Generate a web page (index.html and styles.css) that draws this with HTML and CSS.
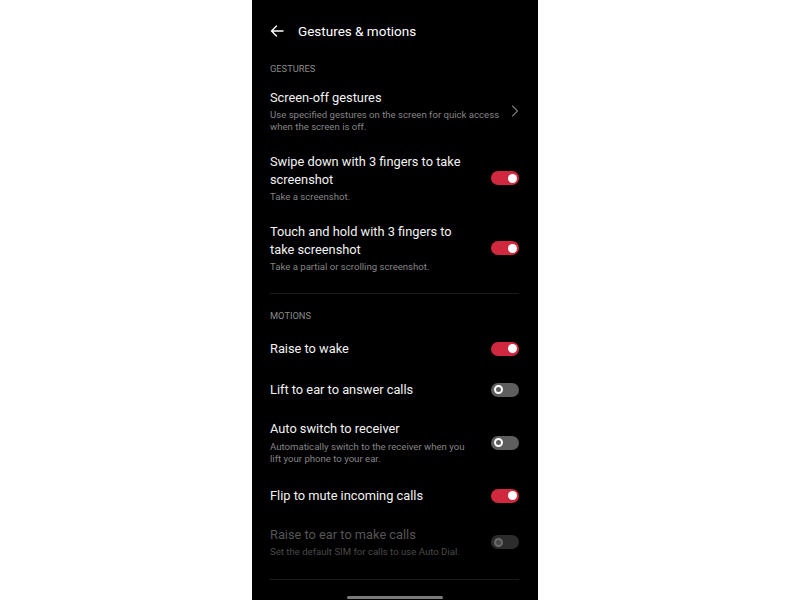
FILE: index.html
```html
<!DOCTYPE html>
<html>
<head>
<meta charset="utf-8">
<link rel="stylesheet" href="styles.css">
</head>
<body>
<div class="phone">
  <div class="header">
    <svg class="back" width="14" height="12" viewBox="0 0 14 12"><path d="M13 6H1.5M6.5 1L1.5 6l5 5" fill="none" stroke="#fff" stroke-width="1.4" stroke-linecap="round" stroke-linejoin="round"/></svg>
    <span class="title">Gestures &amp; motions</span>
  </div>

  <div class="label first">GESTURES</div>

  <div class="item">
    <div class="text wide">
      <div class="t">Screen-off gestures</div>
      <div class="s">Use specified gestures on the screen for quick access when the screen is off.</div>
    </div>
    <svg class="chev" width="8" height="12" viewBox="0 0 8 12"><path d="M1.5 1l5 5-5 5" fill="none" stroke="#7a7a7a" stroke-width="1.1" stroke-linecap="round" stroke-linejoin="round"/></svg>
  </div>

  <div class="item">
    <div class="text">
      <div class="t">Swipe down with 3 fingers to take screenshot</div>
      <div class="s">Take a screenshot.</div>
    </div>
    <div class="toggle on"><span class="knob"></span></div>
  </div>

  <div class="item">
    <div class="text">
      <div class="t">Touch and hold with 3 fingers to take screenshot</div>
      <div class="s">Take a partial or scrolling screenshot.</div>
    </div>
    <div class="toggle on"><span class="knob"></span></div>
  </div>

  <div class="divider"></div>

  <div class="label second">MOTIONS</div>

  <div class="item single">
    <div class="text"><div class="t">Raise to wake</div></div>
    <div class="toggle on"><span class="knob"></span></div>
  </div>

  <div class="item single">
    <div class="text"><div class="t">Lift to ear to answer calls</div></div>
    <div class="toggle off"><span class="knob"></span></div>
  </div>

  <div class="item">
    <div class="text">
      <div class="t">Auto switch to receiver</div>
      <div class="s tall">Automatically switch to the receiver when you lift your phone to your ear.</div>
    </div>
    <div class="toggle off"><span class="knob"></span></div>
  </div>

  <div class="item single">
    <div class="text"><div class="t">Flip to mute incoming calls</div></div>
    <div class="toggle on"><span class="knob"></span></div>
  </div>

  <div class="item disabled">
    <div class="text">
      <div class="t">Raise to ear to make calls</div>
      <div class="s">Set the default SIM for calls to use Auto Dial.</div>
    </div>
    <div class="toggle dis"><span class="knob"></span></div>
  </div>

  <div class="divider last"></div>

  <div class="home"></div>
</div>
</body>
</html>
```

FILE: styles.css
```css
html, body {
  margin: 0;
  padding: 0;
  background: #ffffff;
}
body {
  display: flex;
  justify-content: center;
  font-family: Roboto, "Liberation Sans", sans-serif;
}
.phone {
  width: 286px;
  height: 600px;
  background: #000;
  box-sizing: border-box;
  padding: 0 19px 0 18px;
  display: flex;
  flex-direction: column;
  overflow: hidden;
}
.header {
  display: flex;
  align-items: center;
  height: 18px;
  margin-top: 22px;
}
.back {
  display: block;
  margin-right: 14px;
}
.title {
  color: #fff;
  font-size: 13.5px;
  line-height: 18px;
}
.label {
  color: #8a8a8a;
  font-size: 9.3px;
  line-height: 12px;
}
.label.first { margin-top: 23px; margin-bottom: 4px; }
.label.second { margin-top: 16px; margin-bottom: 6px; }
.item {
  display: flex;
  align-items: center;
  padding: 10px 0;
}
.item.single { padding: 11.5px 0; }
.text {
  flex: 1;
  min-width: 0;
  margin-right: 20px;
}
.text.wide { margin-right: 8px; }
.t {
  color: #f2f2f2;
  font-size: 12.8px;
  line-height: 18px;
}
.s {
  color: #858585;
  font-size: 9.6px;
  line-height: 12px;
  margin-top: 2px;
}
.s.tall { margin-top: 3px; }
.disabled .t { color: #555; }
.disabled .s { color: #4a4a4a; }
.chev { display: block; }
.toggle {
  width: 28px;
  height: 14px;
  border-radius: 7px;
  flex: none;
  display: flex;
  align-items: center;
  box-sizing: border-box;
  padding: 0 2.5px;
}
.toggle.on {
  background: #d0293f;
  justify-content: flex-end;
}
.toggle.off { background: #5e5e5e; }
.toggle.dis { background: #2c2c2c; }
.knob {
  width: 9px;
  height: 9px;
  border-radius: 50%;
  box-sizing: border-box;
}
.on .knob { background: #fff; }
.off .knob { background: #5e5e5e; border: 2px solid #fff; }
.dis .knob { background: #474747; border: 2px solid #6a6a6a; }
.divider {
  height: 1px;
  background: #1c1c1c;
  margin-top: 10px;
}
.divider.last { margin-top: 11px; }
.home {
  width: 96px;
  height: 3px;
  border-radius: 2px;
  background: #7a7a7a;
  align-self: center;
  margin-top: 16px;
}
```
